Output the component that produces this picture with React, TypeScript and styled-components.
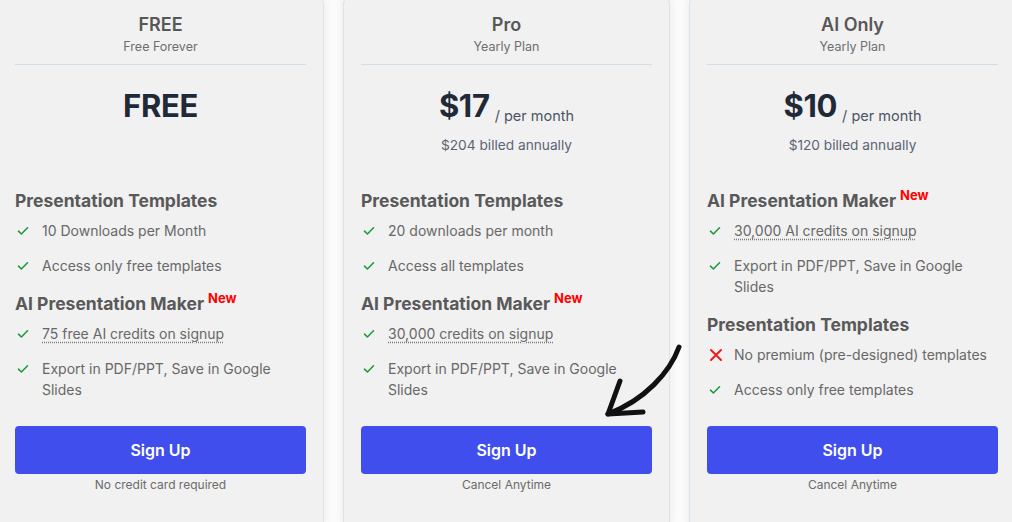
import React from "react";
import styled, { createGlobalStyle } from "styled-components";

const Global = createGlobalStyle`
  html, body { margin: 0; padding: 0; overflow: hidden; background: #fbfbfb; }
  body { font-family: Inter, "Noto Sans", Arial, sans-serif; -webkit-font-smoothing: antialiased; }
  * { box-sizing: border-box; }
`;

const Row = styled.div`
  position: relative;
  display: flex;
  gap: 19px;
  margin: -4px 0 0 -3px;
  width: 1040px;
`;

const Card = styled.div`
  flex: 0 0 327px;
  height: 534px;
  background: #f1f1f1;
  border: 1px solid #dbe3ec;
  border-radius: 8px;
  box-shadow: 0 0 10px rgba(0, 0, 0, 0.07);
  padding: 17px 17px 36px 17px;
  display: flex;
  flex-direction: column;
`;

const Header = styled.div`
  text-align: center;
  padding-bottom: 8px;
  border-bottom: 1px solid #d3dde8;
`;

const Title = styled.div`
  font-size: 18px;
  line-height: 22px;
  font-weight: 600;
  color: #575757;
`;

const Subtitle = styled.div`
  margin-top: 2px;
  font-size: 12.5px;
  line-height: 18px;
  color: #6e6e6e;
`;

const PriceArea = styled.div`
  height: 124px;
  padding-top: 21px;
  text-align: center;
`;

const PriceLine = styled.div`
  display: flex;
  justify-content: center;
  align-items: baseline;
  gap: 5px;
  line-height: 40px;
`;

const Amount = styled.span`
  font-size: 31px;
  font-weight: 700;
  color: #1f2937;
  letter-spacing: -0.3px;
`;

const Per = styled.span`
  font-size: 14.5px;
  color: #4b5563;
  transform: translateY(4px);
`;

const Billed = styled.div`
  margin-top: 3px;
  font-size: 13.7px;
  line-height: 20px;
  color: #5b6474;
`;

const Features = styled.div`
  flex: 1;
  display: flex;
  flex-direction: column;
  gap: 16px;
`;

const Section = styled.div``;

const Heading = styled.div`
  font-size: 17.5px;
  line-height: 24px;
  font-weight: 700;
  color: #595959;
  margin-bottom: 7px;
`;

const NewTag = styled.sup`
  font-size: 13px;
  font-weight: 700;
  color: #ff0000;
  margin-left: 4px;
  vertical-align: 7px;
  line-height: 0;
`;

const List = styled.ul`
  list-style: none;
  margin: 0;
  padding: 0;
  display: flex;
  flex-direction: column;
  gap: 14px;
`;

const Item = styled.li`
  display: flex;
  align-items: flex-start;
  font-size: 14px;
  line-height: 21px;
  color: #686868;
`;

const IconBox = styled.span`
  flex: 0 0 27px;
  height: 21px;
  display: flex;
  align-items: center;
  padding-left: 2px;
`;

const Dotted = styled.span<{ $dotted?: boolean }>`
  text-decoration: ${(p) => (p.$dotted ? "underline dotted #7a7a7a" : "none")};
  text-underline-offset: 3px;
`;

const Footer = styled.div`
  text-align: center;
`;

const Button = styled.button`
  width: 100%;
  height: 48px;
  border: none;
  border-radius: 4px;
  background: #404eed;
  color: #fff;
  font-family: inherit;
  font-size: 16px;
  font-weight: 600;
  cursor: pointer;
`;

const Note = styled.div`
  margin-top: 3px;
  font-size: 12px;
  line-height: 16px;
  color: #6b6b6b;
`;

const Arrow = styled.svg`
  position: absolute;
  left: 603px;
  top: 346px;
  pointer-events: none;
`;

const Check = () => (
  <svg width="12" height="10" viewBox="0 0 12 10">
    <path d="M1.5 5.2 L4.4 8 L10.5 1.8" fill="none" stroke="#1f9a3a" strokeWidth="1.6" strokeLinecap="round" strokeLinejoin="round" />
  </svg>
);

const Cross = () => (
  <svg width="14" height="14" viewBox="0 0 14 14">
    <path d="M2 2 L12 12 M12 2 L2 12" fill="none" stroke="#ee1c1c" strokeWidth="2" strokeLinecap="round" />
  </svg>
);

type Feat = { text: string; dotted?: boolean; no?: boolean };
type Sec = { title: string; isNew?: boolean; items: Feat[] };
type Plan = {
  name: string;
  sub: string;
  amount: string;
  per?: boolean;
  billed?: string;
  sections: Sec[];
  note: string;
};

const plans: Plan[] = [
  {
    name: "FREE",
    sub: "Free Forever",
    amount: "FREE",
    sections: [
      {
        title: "Presentation Templates",
        items: [{ text: "10 Downloads per Month" }, { text: "Access only free templates" }],
      },
      {
        title: "AI Presentation Maker",
        isNew: true,
        items: [
          { text: "75 free AI credits on signup", dotted: true },
          { text: "Export in PDF/PPT, Save in Google Slides" },
        ],
      },
    ],
    note: "No credit card required",
  },
  {
    name: "Pro",
    sub: "Yearly Plan",
    amount: "$17",
    per: true,
    billed: "$204 billed annually",
    sections: [
      {
        title: "Presentation Templates",
        items: [{ text: "20 downloads per month" }, { text: "Access all templates" }],
      },
      {
        title: "AI Presentation Maker",
        isNew: true,
        items: [
          { text: "30,000 credits on signup", dotted: true },
          { text: "Export in PDF/PPT, Save in Google Slides" },
        ],
      },
    ],
    note: "Cancel Anytime",
  },
  {
    name: "AI Only",
    sub: "Yearly Plan",
    amount: "$10",
    per: true,
    billed: "$120 billed annually",
    sections: [
      {
        title: "AI Presentation Maker",
        isNew: true,
        items: [
          { text: "30,000 AI credits on signup", dotted: true },
          { text: "Export in PDF/PPT, Save in Google Slides" },
        ],
      },
      {
        title: "Presentation Templates",
        items: [
          { text: "No premium (pre-designed) templates", no: true },
          { text: "Access only free templates" },
        ],
      },
    ],
    note: "Cancel Anytime",
  },
];

export default function App() {
  return (
    <>
      <Global />
      <Row>
        {plans.map((p) => (
          <Card key={p.name}>
            <Header>
              <Title>{p.name}</Title>
              <Subtitle>{p.sub}</Subtitle>
            </Header>
            <PriceArea>
              <PriceLine>
                <Amount>{p.amount}</Amount>
                {p.per && <Per>/ per month</Per>}
              </PriceLine>
              {p.billed && <Billed>{p.billed}</Billed>}
            </PriceArea>
            <Features>
              {p.sections.map((s) => (
                <Section key={s.title}>
                  <Heading>
                    {s.title}
                    {s.isNew && <NewTag>New</NewTag>}
                  </Heading>
                  <List>
                    {s.items.map((it) => (
                      <Item key={it.text}>
                        <IconBox>{it.no ? <Cross /> : <Check />}</IconBox>
                        <Dotted $dotted={it.dotted}>{it.text}</Dotted>
                      </Item>
                    ))}
                  </List>
                </Section>
              ))}
            </Features>
            <Footer>
              <Button>Sign Up</Button>
              <Note>{p.note}</Note>
            </Footer>
          </Card>
        ))}
        <Arrow width="90" height="80" viewBox="0 0 90 80">
          <path d="M79 5 C70 30, 45 58, 8 72" fill="none" stroke="#111" strokeWidth="5" strokeLinecap="round" />
          <path d="M20 39 L8 72 L43 70" fill="none" stroke="#111" strokeWidth="5" strokeLinecap="round" strokeLinejoin="round" />
        </Arrow>
      </Row>
    </>
  );
}
